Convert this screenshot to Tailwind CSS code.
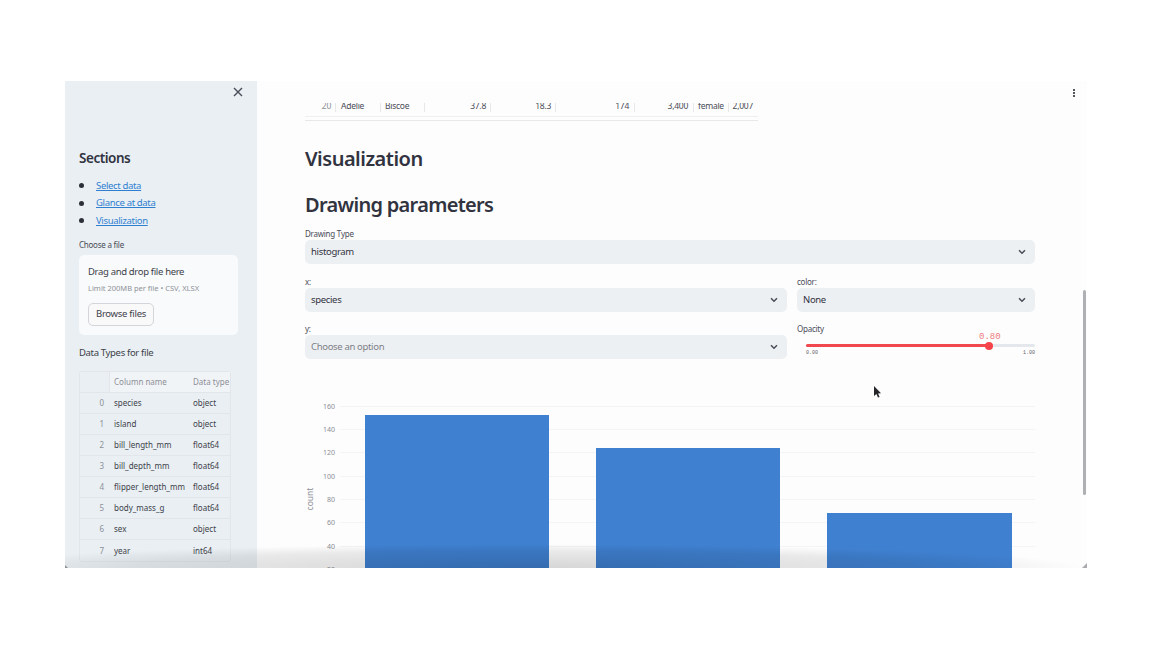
<!DOCTYPE html>
<html lang="en">
<head>
  <meta charset="UTF-8" />
  <title>Drawing parameters</title>
  <script src="https://cdn.jsdelivr.net/npm/@tailwindcss/browser@4"></script>
</head>
<body class="bg-white font-['Noto_Sans',sans-serif] text-[#31333f] w-[1152px] h-[648px] overflow-hidden">
  <div class="pt-[81px] pl-[65px]">
    <div class="relative w-[1022px] h-[487px] flex overflow-hidden bg-[#fdfdfd]">

      <!-- sidebar -->
      <aside class="relative w-[192px] shrink-0 bg-[#e9eff3] pl-[14px] pt-[68px]">
        <button class="absolute right-[14px] top-[6px] text-[#4a4c57]">
          <svg width="10" height="10" viewBox="0 0 10 10" fill="none" stroke="currentColor" stroke-width="1.4"><path d="M1 1l8 8M9 1l-8 8" /></svg>
        </button>
        <h3 class="text-[13.5px] leading-[18px] font-semibold tracking-[-0.035em]">Sections</h3>
        <ul class="mt-[10px] text-[9.5px] tracking-[-0.035em] text-[#2f7fd1]">
          <li class="h-[17.5px] flex items-center gap-[12px]"><span class="w-[5px] h-[5px] rounded-full bg-[#2c2e38]"></span><a class="underline">Select data</a></li>
          <li class="h-[17.5px] flex items-center gap-[12px]"><span class="w-[5px] h-[5px] rounded-full bg-[#2c2e38]"></span><a class="underline">Glance at data</a></li>
          <li class="h-[17.5px] flex items-center gap-[12px]"><span class="w-[5px] h-[5px] rounded-full bg-[#2c2e38]"></span><a class="underline">Visualization</a></li>
        </ul>
        <p class="mt-[9px] text-[8px] tracking-[-0.03em] leading-[12px] text-[#4a4c57]">Choose a file</p>
        <div class="mt-[4px] w-[159px] h-[80px] rounded-[5px] bg-[#f8fafb] px-[9px] pt-[10px]">
          <p class="text-[9.5px] tracking-[-0.035em] leading-[14px] text-[#3d3f4a]">Drag and drop file here</p>
          <p class="mt-[3px] text-[7.5px] leading-[12px] text-[#8f9199]">Limit 200MB per file • CSV, XLSX</p>
          <button class="mt-[9px] w-[66px] h-[23px] rounded-[5px] border border-[#d3d5da] bg-[#f9f9fa] text-[9.5px] tracking-[-0.03em] text-[#3d3f4a]">Browse files</button>
        </div>
        <p class="mt-[11px] text-[9.5px] tracking-[-0.035em] leading-[14px] text-[#3d3f4a]">Data Types for file</p>
        <div class="mt-[11px] w-[152px] border border-[#e2e6ea] rounded-[3px] text-[8px] text-[#3d3f4a] whitespace-nowrap">
          <div class="flex h-[21px] items-center text-[#8d8f98] bg-[#f1f4f6] border-b border-[#e2e6ea]">
            <span class="w-[30px] h-full border-r border-[#e2e6ea] bg-[#e9eff3]"></span>
            <span class="w-[79px] pl-[4px]">Column name</span>
            <span class="pl-[4px]">Data type</span>
          </div>
          <div class="flex h-[21.1px] items-center border-b border-[#e2e6ea]"><span class="w-[30px] pr-[6px] text-right text-[#8d8f98]">0</span><span class="w-[79px] pl-[4px]">species</span><span class="pl-[4px]">object</span></div>
          <div class="flex h-[21.1px] items-center border-b border-[#e2e6ea]"><span class="w-[30px] pr-[6px] text-right text-[#8d8f98]">1</span><span class="w-[79px] pl-[4px]">island</span><span class="pl-[4px]">object</span></div>
          <div class="flex h-[21.1px] items-center border-b border-[#e2e6ea]"><span class="w-[30px] pr-[6px] text-right text-[#8d8f98]">2</span><span class="w-[79px] pl-[4px]">bill_length_mm</span><span class="pl-[4px]">float64</span></div>
          <div class="flex h-[21.1px] items-center border-b border-[#e2e6ea]"><span class="w-[30px] pr-[6px] text-right text-[#8d8f98]">3</span><span class="w-[79px] pl-[4px]">bill_depth_mm</span><span class="pl-[4px]">float64</span></div>
          <div class="flex h-[21.1px] items-center border-b border-[#e2e6ea]"><span class="w-[30px] pr-[6px] text-right text-[#8d8f98]">4</span><span class="w-[79px] pl-[4px]">flipper_length_mm</span><span class="pl-[4px]">float64</span></div>
          <div class="flex h-[21.1px] items-center border-b border-[#e2e6ea]"><span class="w-[30px] pr-[6px] text-right text-[#8d8f98]">5</span><span class="w-[79px] pl-[4px]">body_mass_g</span><span class="pl-[4px]">float64</span></div>
          <div class="flex h-[21.1px] items-center border-b border-[#e2e6ea]"><span class="w-[30px] pr-[6px] text-right text-[#8d8f98]">6</span><span class="w-[79px] pl-[4px]">sex</span><span class="pl-[4px]">object</span></div>
          <div class="flex h-[21.1px] items-center"><span class="w-[30px] pr-[6px] text-right text-[#8d8f98]">7</span><span class="w-[79px] pl-[4px]">year</span><span class="pl-[4px]">int64</span></div>
        </div>
      </aside>

      <!-- main -->
      <main class="relative flex-1 pl-[48px] pt-[22px] overflow-hidden">
        <div class="w-[453px] h-[18px] overflow-hidden border-b border-[#e6e8ea] text-[8.5px] tracking-[-0.03em] text-[#4a4c57]">
          <div class="-mt-[7px] h-[21px] flex items-center border-b border-[#eeeff1]">
            <span class="w-[30px] pr-[4px] text-right text-[#8d8f98]">20</span>
            <span class="w-[45px] pl-[5px] border-l border-[#e6e8ea]">Adelie</span>
            <span class="w-[44px] pl-[4px] border-l border-[#e6e8ea]">Biscoe</span>
            <span class="w-[66px] pr-[4px] text-right border-l border-[#e6e8ea]">37.8</span>
            <span class="w-[65px] pr-[4px] text-right border-l border-[#e6e8ea]">18.3</span>
            <span class="w-[79px] pr-[5px] text-right border-l border-[#e6e8ea]">174</span>
            <span class="w-[59px] pr-[5px] text-right border-l border-[#e6e8ea]">3,400</span>
            <span class="w-[35px] pl-[4px] border-l border-[#e6e8ea]">female</span>
            <span class="w-[30px] pr-[5px] text-right border-l border-[#e6e8ea]">2,007</span>
          </div>
        </div>

        <h2 class="mt-[23px] text-[20px] leading-[30px] font-semibold tracking-[-0.025em] text-[#31333f]">Visualization</h2>
        <h2 class="mt-[16px] text-[20px] leading-[30px] font-semibold tracking-[-0.035em] text-[#31333f]">Drawing parameters</h2>

        <div class="mt-[8px] w-[730px]">
          <label class="block text-[8px] tracking-[-0.03em] leading-[12px] text-[#4a4c57]">Drawing Type</label>
          <div class="h-[24px] rounded-[5px] bg-[#edf0f3] flex items-center justify-between pl-[6px] pr-[9px] text-[9.5px] tracking-[-0.035em]">
            <span>histogram</span>
            <svg width="8" height="6" viewBox="0 0 8 6" fill="none" stroke="#4a4c57" stroke-width="1.5"><path d="M1 1.2l3 3 3-3" /></svg>
          </div>
        </div>

        <div class="mt-[12px] w-[730px] grid grid-cols-[482px_238px] gap-x-[10px] gap-y-[11px]">
          <div>
            <label class="block text-[8px] tracking-[-0.03em] leading-[12px] text-[#4a4c57]">x:</label>
            <div class="h-[24px] rounded-[5px] bg-[#edf0f3] flex items-center justify-between pl-[6px] pr-[9px] text-[9.5px] tracking-[-0.035em]">
              <span>species</span>
              <svg width="8" height="6" viewBox="0 0 8 6" fill="none" stroke="#4a4c57" stroke-width="1.5"><path d="M1 1.2l3 3 3-3" /></svg>
            </div>
          </div>
          <div>
            <label class="block text-[8px] tracking-[-0.03em] leading-[12px] text-[#4a4c57]">color:</label>
            <div class="h-[24px] rounded-[5px] bg-[#edf0f3] flex items-center justify-between pl-[6px] pr-[9px] text-[9.5px] tracking-[-0.035em]">
              <span>None</span>
              <svg width="8" height="6" viewBox="0 0 8 6" fill="none" stroke="#4a4c57" stroke-width="1.5"><path d="M1 1.2l3 3 3-3" /></svg>
            </div>
          </div>
          <div>
            <label class="block text-[8px] tracking-[-0.03em] leading-[12px] text-[#4a4c57]">y:</label>
            <div class="h-[24px] rounded-[5px] bg-[#edf0f3] flex items-center justify-between pl-[6px] pr-[9px] text-[9.5px] tracking-[-0.035em] text-[#7d7f88]">
              <span>Choose an option</span>
              <svg width="8" height="6" viewBox="0 0 8 6" fill="none" stroke="#4a4c57" stroke-width="1.5"><path d="M1 1.2l3 3 3-3" /></svg>
            </div>
          </div>
          <div>
            <label class="block text-[8px] tracking-[-0.03em] leading-[12px] text-[#4a4c57]">Opacity</label>
            <div class="relative ml-[9px] mt-[9px] h-[3px] rounded-full bg-[#e4e8ec]">
              <div class="h-full w-[80%] rounded-full bg-[#f0484e]"></div>
              <span class="absolute left-[179px] -top-[2.5px] w-[8px] h-[8px] rounded-full bg-[#f5434a]"></span>
              <span class="absolute left-[173px] -top-[12px] font-['Liberation_Mono',monospace] text-[9px] leading-[10px] text-[#ee7b80]">0.80</span>
              <div class="absolute left-0 right-0 top-[6px] flex justify-between font-['Liberation_Mono',monospace] text-[5px] leading-[7px] text-[#5b5d66]"><span>0.00</span><span>1.00</span></div>
            </div>
          </div>
        </div>
      </main>

      <!-- chart: plotted at its own coordinates, origin is the window's top left -->
      <svg class="absolute left-0 top-0 pointer-events-none" width="1022" height="487" font-family="Noto Sans, sans-serif">
        <g stroke="#f3f4f5" stroke-width="1">
          <path d="M275 325.5H970M275 348.5H970M275 371.5H970M275 395.5H970M275 418.5H970M275 441.5H970M275 465.5H970" />
        </g>
        <g fill="#3f80d0">
          <rect x="300" y="334" width="184" height="153" />
          <rect x="531" y="367" width="184" height="120" />
          <rect x="762" y="432" width="185" height="55" />
        </g>
        <g font-size="7" fill="#8b8d95" text-anchor="end">
          <text x="270" y="328">160</text>
          <text x="270" y="351">140</text>
          <text x="270" y="374">120</text>
          <text x="270" y="398">100</text>
          <text x="270" y="421">80</text>
          <text x="270" y="444">60</text>
          <text x="270" y="468">40</text>
          <text x="270" y="491">20</text>
        </g>
        <text transform="translate(248 418) rotate(-90)" font-size="8.5" fill="#8b8d95" text-anchor="middle">count</text>
      </svg>

      <!-- overlays -->
      <button class="absolute left-[1008px] top-[8px] flex flex-col gap-[1px]">
        <span class="w-[2px] h-[2px] bg-[#55575f]"></span>
        <span class="w-[2px] h-[2px] bg-[#55575f]"></span>
        <span class="w-[2px] h-[2px] bg-[#55575f]"></span>
      </button>
      <div class="absolute left-[1018px] top-[209px] w-[3px] h-[205px] rounded-full bg-[#aeb0b3]"></div>
      <svg class="absolute left-[808px] top-[304px]" width="9" height="14" viewBox="0 0 9 14"><path d="M1 1v10l2.4-2 1.6 3.6 1.6-.7L5 8.4l3-.2z" fill="#26272b" /></svg>
      <div class="absolute left-0 right-0 bottom-0 h-[24px] bg-[radial-gradient(ellipse_55%_100%_at_45%_100%,#00000028,#00000014_70%,transparent)] pointer-events-none"></div>
      <svg class="absolute left-0 bottom-0" width="3" height="3"><path d="M0 0v3h3z" fill="#8f9195" /></svg>
      <svg class="absolute right-0 bottom-0" width="5" height="5"><path d="M5 0v5H0z" fill="#a9abaf" /></svg>
    </div>
  </div>
</body>
</html>
